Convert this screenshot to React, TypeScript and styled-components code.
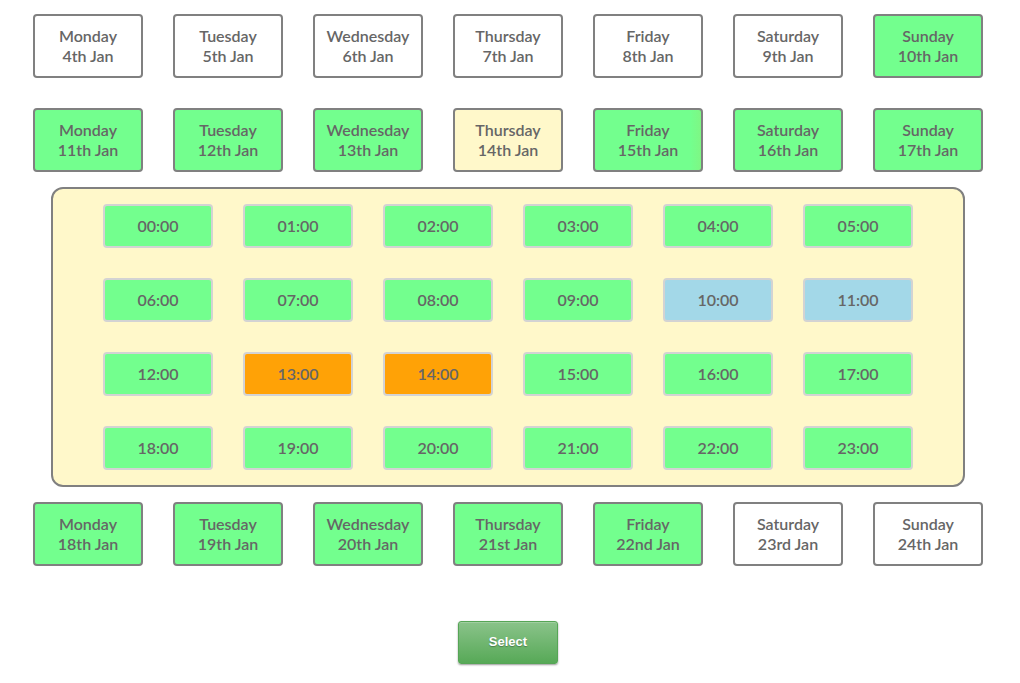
import React, { useState } from "react";
import styled, { createGlobalStyle, css } from "styled-components";

type Status = "closed" | "free" | "open" | "limited" | "booked" | "chosen";

interface Day {
  name: string;
  date: string;
  status: Status;
}

const fills: Record<Status, string> = {
  closed: "#ffffff",
  free: "#73ff8e",
  open: "#fff8ca",
  limited: "linear-gradient(to right, #73ff8e 90%, #7ef784 100%)",
  booked: "#a3d8e8",
  chosen: "#ffa206",
};

const dayNames = ["Monday", "Tuesday", "Wednesday", "Thursday", "Friday", "Saturday", "Sunday"];

const makeWeek = (dates: string[], statuses: Status[]): Day[] =>
  dayNames.map((name, i) => ({ name, date: `${dates[i]} Jan`, status: statuses[i] }));

const weeksBefore: Day[][] = [
  makeWeek(
    ["4th", "5th", "6th", "7th", "8th", "9th", "10th"],
    ["closed", "closed", "closed", "closed", "closed", "closed", "free"]
  ),
  makeWeek(
    ["11th", "12th", "13th", "14th", "15th", "16th", "17th"],
    ["free", "free", "free", "open", "limited", "free", "free"]
  ),
];

const weeksAfter: Day[][] = [
  makeWeek(
    ["18th", "19th", "20th", "21st", "22nd", "23rd", "24th"],
    ["free", "free", "free", "free", "free", "closed", "closed"]
  ),
];

const hours = Array.from({ length: 24 }, (_, h) => h);
const bookedHours = [10, 11];

const GlobalStyle = createGlobalStyle`
  *, *::before, *::after {
    box-sizing: border-box;
  }

  body {
    margin: 0;
    background: #ffffff;
    color: #666666;
    font-family: Lato, sans-serif;
    -webkit-font-smoothing: antialiased;
  }
`;

const Page = styled.main`
  display: flex;
  flex-direction: column;
  padding: 14px 37px 16px 33px;
`;

const Weeks = styled.div`
  display: flex;
  flex-direction: column;
  gap: 30px;
`;

const Week = styled.div`
  display: grid;
  grid-template-columns: repeat(7, minmax(0, 1fr));
  gap: 30px;
`;

const cell = css<{ $status: Status }>`
  padding: 10px 0;
  border: 2px solid #808080;
  border-radius: 4px;
  background: ${({ $status }) => fills[$status]};
  color: inherit;
  font-family: inherit;
  font-size: 16px;
  font-weight: 600;
  line-height: 20px;
  text-align: center;
  cursor: pointer;
`;

const DayButton = styled.button<{ $status: Status }>`
  ${cell}

  &:disabled {
    cursor: default;
  }
`;

const DayLine = styled.span`
  display: block;
  white-space: nowrap;
`;

const HoursPanel = styled.section`
  display: grid;
  grid-template-columns: repeat(6, minmax(0, 1fr));
  gap: 30px;
  margin: 15px 18px;
  padding: 15px 50px;
  border: 2px solid #808080;
  border-radius: 12px;
  background: ${fills.open};
`;

const HourButton = styled.button<{ $status: Status }>`
  ${cell}
  border-color: #d3d3d3;
`;

const SelectButton = styled.button`
  align-self: center;
  width: 100px;
  height: 43px;
  margin-top: 55px;
  padding: 0 0 2px;
  border: 1px solid #56a556;
  border-radius: 3px;
  background: linear-gradient(to bottom, #8ac38a, #57a957);
  box-shadow: inset 0 1px 0 rgba(255, 255, 255, 0.2), 0 1px 2px rgba(0, 0, 0, 0.4);
  color: #ffffff;
  font-family: "Liberation Sans", Arial, sans-serif;
  font-size: 13px;
  font-weight: 700;
  line-height: 20px;
  text-shadow: 0 1px 1px rgba(0, 0, 0, 0.3);
  cursor: pointer;
`;

function WeekRow({ days }: { days: Day[] }) {
  return (
    <Week>
      {days.map((day) => (
        <DayButton key={day.date} type="button" $status={day.status} disabled={day.status === "closed"}>
          <DayLine>{day.name}</DayLine>
          <DayLine>{day.date}</DayLine>
        </DayButton>
      ))}
    </Week>
  );
}

export default function App() {
  const [chosen, setChosen] = useState<number[]>([13, 14]);

  const toggle = (hour: number) =>
    setChosen((list) => (list.includes(hour) ? list.filter((h) => h !== hour) : [...list, hour]));

  const statusOf = (hour: number): Status => {
    if (bookedHours.includes(hour)) return "booked";
    return chosen.includes(hour) ? "chosen" : "free";
  };

  return (
    <>
      <GlobalStyle />
      <Page>
        <Weeks>
          {weeksBefore.map((days) => (
            <WeekRow key={days[0].date} days={days} />
          ))}
        </Weeks>
        <HoursPanel>
          {hours.map((hour) => (
            <HourButton
              key={hour}
              type="button"
              $status={statusOf(hour)}
              disabled={bookedHours.includes(hour)}
              onClick={() => toggle(hour)}
            >
              {`${String(hour).padStart(2, "0")}:00`}
            </HourButton>
          ))}
        </HoursPanel>
        <Weeks>
          {weeksAfter.map((days) => (
            <WeekRow key={days[0].date} days={days} />
          ))}
        </Weeks>
        <SelectButton type="button">Select</SelectButton>
      </Page>
    </>
  );
}
